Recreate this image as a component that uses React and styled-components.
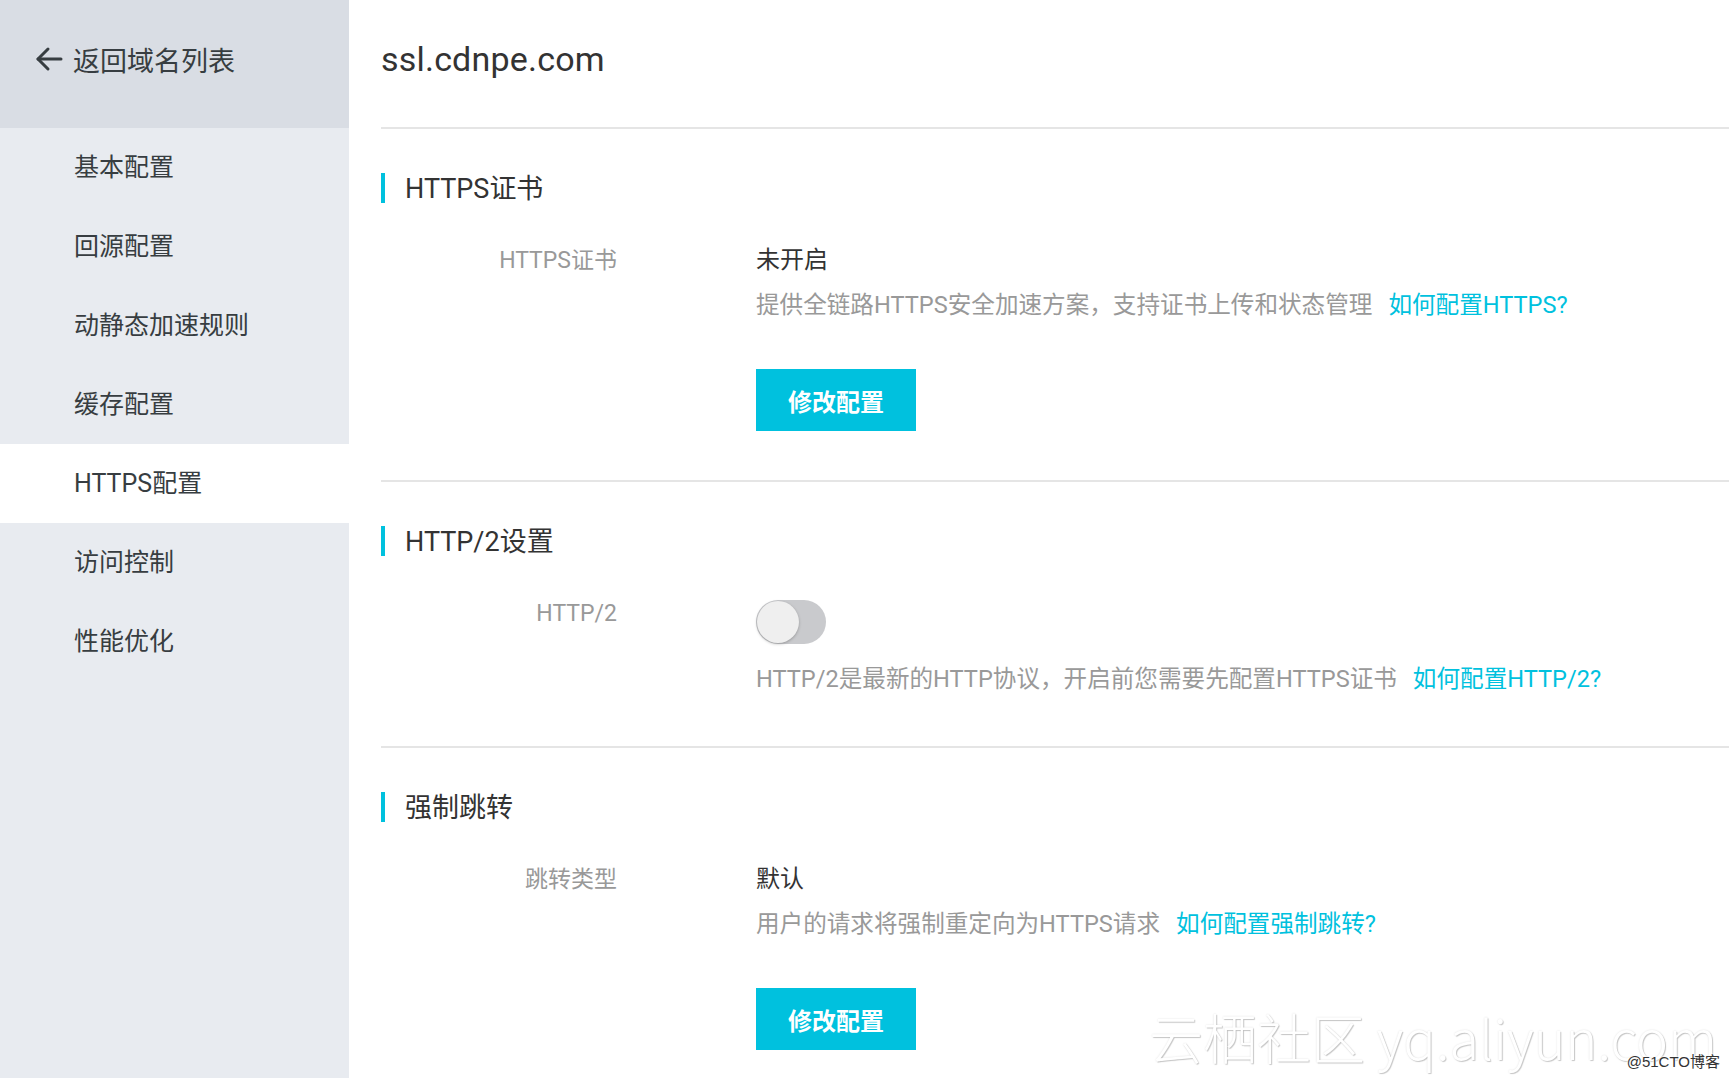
import React from 'react';
import styled, { createGlobalStyle } from 'styled-components';

const GlobalStyle = createGlobalStyle`
  html, body { margin: 0; padding: 0; background: #fff; }
  body {
    font-family: Roboto, "Noto Sans CJK SC", "Noto Sans", sans-serif;
    color: #333;
    -webkit-font-smoothing: antialiased;
  }
  * { box-sizing: border-box; }
`;

const Page = styled.div`
  position: relative;
  display: flex;
  width: 100%;
  height: 100vh;
  min-height: 1078px;
  overflow: hidden;
`;

const Sidebar = styled.aside`
  flex: 0 0 349px;
  width: 349px;
  background: #e8ebf0;
  display: flex;
  flex-direction: column;
`;

const BackBar = styled.div`
  height: 128px;
  background: #d9dde4;
  display: flex;
  align-items: center;
  gap: 10px;
  padding: 0 0 10px 35px;
  font-size: 27px;
  color: #373d41;
  cursor: pointer;
`;

const MenuItem = styled.div`
  height: 79px;
  display: flex;
  align-items: center;
  padding: 0 0 6px 74px;
  font-size: 25px;
  color: #373d41;
  background: ${(p) => (p.$active ? '#ffffff' : 'transparent')};
`;

const Main = styled.main`
  flex: 1;
  min-width: 0;
  padding-left: 32px;
`;

const Header = styled.div`
  height: 129px;
  display: flex;
  align-items: center;
  padding-bottom: 10px;
  font-size: 34px;
  letter-spacing: 0.2px;
  color: #333;
  border-bottom: 2px solid #e5e5e5;
`;

const Section = styled.section`
  padding: 44px 0 44px;
  border-bottom: ${(p) => (p.$last ? 'none' : '2px solid #e5e5e5')};
`;

const SectionTitle = styled.h2`
  margin: 0;
  height: 30px;
  display: flex;
  align-items: center;
  font-size: 27px;
  font-weight: 400;
  color: #333;
  & > span {
    margin-top: -4px;
  }
  &::before {
    content: '';
    width: 4px;
    height: 30px;
    background: #00c1de;
    margin-right: 20px;
  }
`;

const Field = styled.div`
  margin-top: 35px;
  display: grid;
  grid-template-columns: 236px 1fr;
  column-gap: 139px;
`;

const Label = styled.div`
  text-align: right;
  line-height: 45px;
  font-size: 23px;
  color: #999;
`;

const Content = styled.div`
  display: flex;
  flex-direction: column;
  align-items: flex-start;
`;

const Value = styled.div`
  line-height: 45px;
  font-size: 24px;
  color: #333;
`;

const Desc = styled.div`
  line-height: 45px;
  font-size: 23.6px;
  color: #999;
  margin-top: ${(p) => p.$mt || 0}px;
  white-space: nowrap;
`;

const Link = styled.a`
  color: #00c1de;
  text-decoration: none;
  margin-left: 16px;
  cursor: pointer;
`;

const Button = styled.button`
  margin: 41px 0 5px;
  width: 160px;
  height: 62px;
  border: none;
  background: #00c1de;
  color: #fff;
  font-family: inherit;
  font-size: 24px;
  font-weight: 700;
  cursor: pointer;
`;

const Toggle = styled.div`
  margin-top: 9px;
  width: 70px;
  height: 44px;
  border-radius: 22px;
  background: #c9cacd;
  position: relative;
  &::after {
    content: '';
    position: absolute;
    left: 1px;
    top: 1px;
    width: 42px;
    height: 42px;
    border-radius: 50%;
    background: #efefef;
    box-shadow: 0 1px 3px rgba(0, 0, 0, 0.25);
  }
`;

const Watermark = styled.div`
  position: absolute;
  right: 12px;
  bottom: 14px;
  font-family: "Noto Sans CJK SC", "Noto Sans", sans-serif;
  font-weight: 300;
  font-size: 54px;
  line-height: 1;
  color: #fff;
  white-space: nowrap;
  text-shadow: 1px 1px 1px rgba(0, 0, 0, 0.2), 0 0 2px rgba(0, 0, 0, 0.12);
  pointer-events: none;
`;

const Credit = styled.div`
  position: absolute;
  right: 9px;
  bottom: 7px;
  font-family: "Liberation Sans", "Noto Sans CJK SC", sans-serif;
  font-size: 15px;
  color: #333;
  text-shadow: 0 0 2px #fff, 0 0 2px #fff, 0 0 3px #fff;
  pointer-events: none;
`;

const BackArrow = () => (
  <svg width="28" height="28" viewBox="0 0 28 28" fill="none" stroke="#373d41" strokeWidth="3" strokeLinecap="round" strokeLinejoin="round">
    <path d="M26 14H3" />
    <path d="M13 4L3 14l10 10" />
  </svg>
);

const menu = ['基本配置', '回源配置', '动静态加速规则', '缓存配置', 'HTTPS配置', '访问控制', '性能优化'];

export default function App() {
  return (
    <>
      <GlobalStyle />
      <Page>
        <Sidebar>
          <BackBar>
            <BackArrow />
            <span>返回域名列表</span>
          </BackBar>
          {menu.map((m) => (
            <MenuItem key={m} $active={m === 'HTTPS配置'}>
              {m}
            </MenuItem>
          ))}
        </Sidebar>
        <Main>
          <Header>ssl.cdnpe.com</Header>

          <Section>
            <SectionTitle><span>HTTPS证书</span></SectionTitle>
            <Field>
              <Label>HTTPS证书</Label>
              <Content>
                <Value>未开启</Value>
                <Desc>
                  提供全链路HTTPS安全加速方案，支持证书上传和状态管理
                  <Link>如何配置HTTPS?</Link>
                </Desc>
                <Button>修改配置</Button>
              </Content>
            </Field>
          </Section>

          <Section>
            <SectionTitle><span>HTTP/2设置</span></SectionTitle>
            <Field>
              <Label>HTTP/2</Label>
              <Content>
                <Toggle />
                <Desc $mt={13}>
                  HTTP/2是最新的HTTP协议，开启前您需要先配置HTTPS证书
                  <Link>如何配置HTTP/2?</Link>
                </Desc>
              </Content>
            </Field>
          </Section>

          <Section $last>
            <SectionTitle><span>强制跳转</span></SectionTitle>
            <Field>
              <Label>跳转类型</Label>
              <Content>
                <Value>默认</Value>
                <Desc>
                  用户的请求将强制重定向为HTTPS请求
                  <Link>如何配置强制跳转?</Link>
                </Desc>
                <Button>修改配置</Button>
              </Content>
            </Field>
          </Section>
        </Main>
        <Watermark>云栖社区 yq.aliyun.com</Watermark>
        <Credit>@51CTO博客</Credit>
      </Page>
    </>
  );
}
